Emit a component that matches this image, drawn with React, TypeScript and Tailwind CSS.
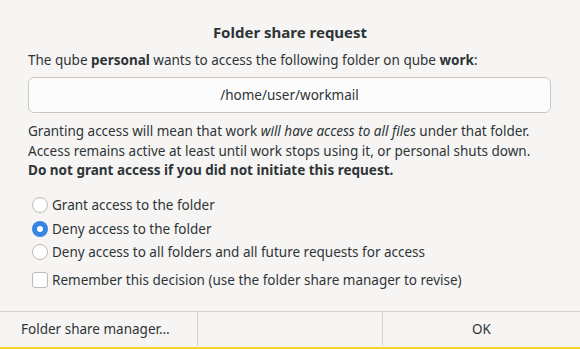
import { useState } from 'react'

const options = [
  'Grant access to the folder',
  'Deny access to the folder',
  'Deny access to all folders and all future requests for access',
]

export default function App() {
  const [choice, setChoice] = useState(1)
  const [remember, setRemember] = useState(false)

  return (
    <div
      className="w-[580px] h-[349px] bg-[#f6f5f4] text-[#2e3436] flex flex-col overflow-hidden"
      style={{ fontFamily: '"Noto Sans", "Open Sans", sans-serif' }}
    >
      <div className="flex-1 flex flex-col px-[28px]">
        <h1 className="mt-[21px] h-[22px] leading-[22px] text-center text-[15px] font-bold">
          Folder share request
        </h1>
        <p className="mt-[7px] h-[20px] leading-[20px] text-[13.5px]">
          The qube <b>personal</b> wants to access the following folder on qube <b>work</b>:
        </p>
        <div className="mt-[7px] h-[36px] w-[523px] rounded-[6px] border border-[#cdc7c2] bg-[#fcfcfc] flex items-center justify-center text-[13.5px]">
          /home/user/workmail
        </div>
        <div className="mt-[9px] text-[13.5px] leading-[19.5px]">
          <p>
            Granting access will mean that work <i>will have access to all files</i> under that folder.
          </p>
          <p>Access remains active at least until work stops using it, or personal shuts down.</p>
          <p className="font-bold">Do not grant access if you did not initiate this request.</p>
        </div>
        <div className="mt-[13px] flex flex-col">
          {options.map((label, i) => (
            <label
              key={label}
              className="h-[23.5px] flex items-center gap-[4px] pl-[4px] text-[13.5px] cursor-default"
              onClick={() => setChoice(i)}
            >
              {choice === i ? (
                <span className="w-[16px] h-[16px] rounded-full bg-[#3584e4] flex items-center justify-center">
                  <span className="w-[6px] h-[6px] rounded-full bg-white" />
                </span>
              ) : (
                <span className="w-[16px] h-[16px] rounded-full border border-[#c0bab5] bg-white" />
              )}
              {label}
            </label>
          ))}
        </div>
        <label
          className="mt-[5px] h-[22px] flex items-center gap-[4px] pl-[4px] text-[13.5px] cursor-default"
          onClick={() => setRemember(!remember)}
        >
          <span className="w-[16px] h-[16px] rounded-[3px] border border-[#c0bab5] bg-white" />
          Remember this decision (use the folder share manager to revise)
        </label>
      </div>
      <div className="h-[38px] border-t border-[#d6d1cd] flex text-[13.5px]">
        <button className="w-[197px] h-[35px] text-left pl-[21px]">Folder share manager…</button>
        <div className="w-px h-[34px] bg-[#d6d1cd]" />
        <button className="w-[184px] h-[35px]" />
        <div className="w-px h-[34px] bg-[#d6d1cd]" />
        <button className="flex-1 h-[35px] text-center">OK</button>
      </div>
      <div className="h-[2px] bg-[#f6d32d] -mt-[2px]" />
    </div>
  )
}
